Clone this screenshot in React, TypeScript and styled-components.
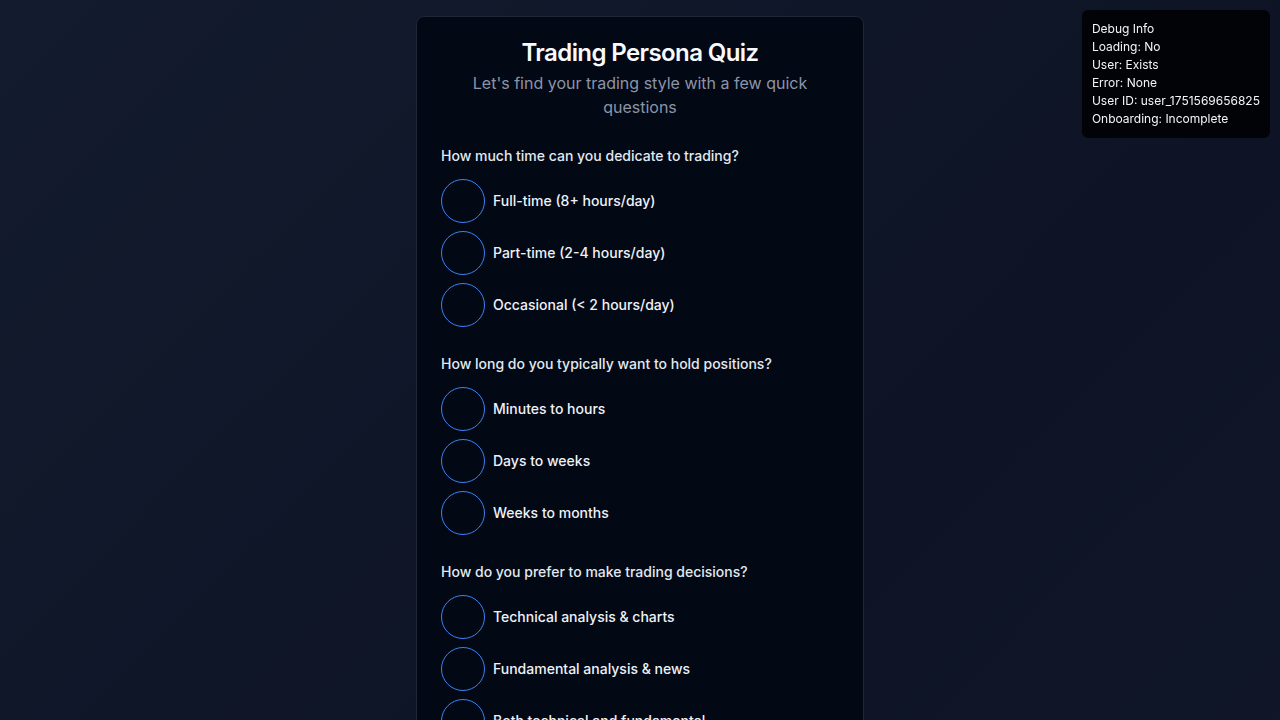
import React from "react";
import styled, { createGlobalStyle } from "styled-components";

const GlobalStyle = createGlobalStyle`
  * { box-sizing: border-box; }
  html, body { margin: 0; padding: 0; }
  body {
    font-family: Inter, "Noto Sans", "Liberation Sans", sans-serif;
    background: #0f172a;
    color: #f8fafc;
    -webkit-font-smoothing: antialiased;
  }
`;

const Page = styled.div`
  min-height: 100vh;
  background: linear-gradient(135deg, #131b2e 0%, #0f1628 40%, #0e1426 60%, #111829 100%);
  display: flex;
  justify-content: center;
  padding: 16px 16px 40px;
`;

const Card = styled.div`
  width: 448px;
  background: #030815;
  border: 1px solid #1e2636;
  border-radius: 8px;
  padding: 24px;
  display: flex;
  flex-direction: column;
`;

const Header = styled.header`
  display: flex;
  flex-direction: column;
  align-items: center;
  text-align: center;
  gap: 6px;
`;

const Title = styled.h1`
  margin: 0;
  font-size: 24px;
  line-height: 24px;
  font-weight: 600;
  letter-spacing: -0.6px;
  color: #f8fafc;
`;

const Subtitle = styled.p`
  margin: 0;
  font-size: 16px;
  line-height: 24px;
  color: #8b95a8;
  padding: 0 20px;
`;

const Questions = styled.div`
  display: flex;
  flex-direction: column;
  gap: 27px;
  margin-top: 27px;
`;

const Group = styled.fieldset`
  border: 0;
  margin: 0;
  padding: 0;
  display: flex;
  flex-direction: column;
  gap: 13px;
`;

const Question = styled.legend`
  padding: 0;
  float: left;
  font-size: 14px;
  line-height: 20px;
  font-weight: 500;
  color: #e2e8f0;
`;

const Options = styled.div`
  display: flex;
  flex-direction: column;
  gap: 8px;
`;

const Option = styled.label`
  display: flex;
  align-items: center;
  gap: 8px;
  cursor: pointer;
`;

const Circle = styled.span`
  width: 44px;
  height: 44px;
  border-radius: 50%;
  border: 1px solid #3b82f6;
  flex-shrink: 0;
`;

const OptionText = styled.span`
  font-size: 14px;
  line-height: 20px;
  font-weight: 500;
  color: #eef2f7;
`;

const Debug = styled.div`
  position: fixed;
  top: 10px;
  right: 10px;
  background: rgba(0, 0, 0, 0.82);
  color: #f1f5f9;
  border-radius: 6px;
  padding: 10px;
  font-size: 12px;
  line-height: 18px;
  z-index: 10;
`;

const quiz = [
  {
    q: "How much time can you dedicate to trading?",
    options: ["Full-time (8+ hours/day)", "Part-time (2-4 hours/day)", "Occasional (< 2 hours/day)"],
  },
  {
    q: "How long do you typically want to hold positions?",
    options: ["Minutes to hours", "Days to weeks", "Weeks to months"],
  },
  {
    q: "How do you prefer to make trading decisions?",
    options: ["Technical analysis & charts", "Fundamental analysis & news", "Both technical and fundamental"],
  },
  {
    q: "What is your risk tolerance?",
    options: ["High risk, high reward", "Moderate risk", "Low risk, steady returns"],
  },
];

const debugLines = [
  "Debug Info",
  "Loading: No",
  "User: Exists",
  "Error: None",
  "User ID: user_1751569656825",
  "Onboarding: Incomplete",
];

export default function App() {
  return (
    <>
      <GlobalStyle />
      <Page>
        <Card>
          <Header>
            <Title>Trading Persona Quiz</Title>
            <Subtitle>Let's find your trading style with a few quick questions</Subtitle>
          </Header>
          <Questions>
            {quiz.map((item) => (
              <Group key={item.q}>
                <Question>{item.q}</Question>
                <Options>
                  {item.options.map((o) => (
                    <Option key={o}>
                      <Circle />
                      <OptionText>{o}</OptionText>
                    </Option>
                  ))}
                </Options>
              </Group>
            ))}
          </Questions>
        </Card>
      </Page>
      <Debug>
        {debugLines.map((l) => (
          <div key={l}>{l}</div>
        ))}
      </Debug>
    </>
  );
}
